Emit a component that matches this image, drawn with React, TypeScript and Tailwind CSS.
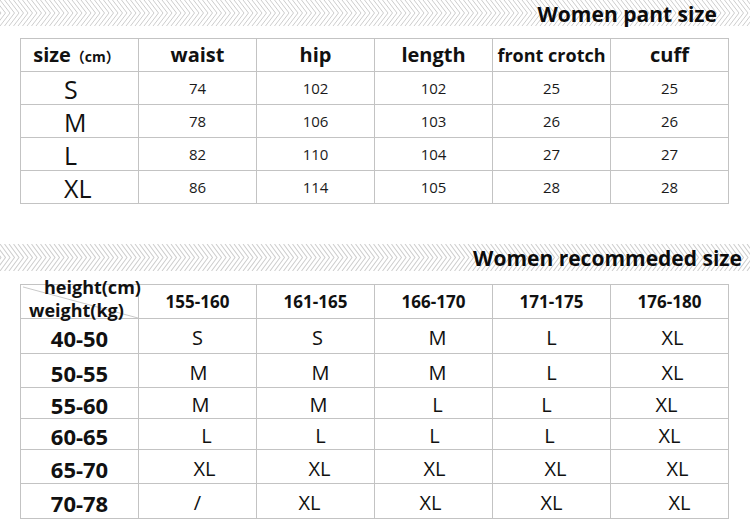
import React from "react";

const PANT_HEAD: [string, string][] = [
  ["waist", "text-[20px]"],
  ["hip", "text-[20px]"],
  ["length", "text-[20px]"],
  ["front crotch", "text-[18px]"],
  ["cuff", "text-[20px]"],
];
const PANT_ROWS: [string, string[]][] = [
  ["S", ["74", "102", "102", "25", "25"]],
  ["M", ["78", "106", "103", "26", "26"]],
  ["L", ["82", "110", "104", "27", "27"]],
  ["XL", ["86", "114", "105", "28", "28"]],
];

const HEIGHTS = ["155-160", "161-165", "166-170", "171-175", "176-180"];

// [label, row height class, cells as [size, nudge class]]
const REC_ROWS: [string, string, [string, string][]][] = [
  ["40-50", "h-[35px]", [["S", ""], ["S", "translate-x-[2px]"], ["M", "translate-x-[4px]"], ["L", ""], ["XL", "translate-x-[3px]"]]],
  ["50-55", "h-[34px]", [["M", "translate-x-[1px]"], ["M", "translate-x-[5px]"], ["M", "translate-x-[4px]"], ["L", ""], ["XL", "translate-x-[3px]"]]],
  ["55-60", "h-[31px]", [["M", "translate-x-[3px]"], ["M", "translate-x-[3px]"], ["L", "translate-x-[4px]"], ["L", "-translate-x-[5px]"], ["XL", "-translate-x-[3px]"]]],
  ["60-65", "h-[31px]", [["L", "translate-x-[9px]"], ["L", "translate-x-[5px]"], ["L", "translate-x-[1px]"], ["L", "-translate-x-[2px]"], ["XL", ""]]],
  ["65-70", "h-[34px]", [["XL", "translate-x-[7px]"], ["XL", "translate-x-[4px]"], ["XL", "translate-x-[1px]"], ["XL", "translate-x-[4px]"], ["XL", "translate-x-[8px]"]]],
  ["70-78", "h-[35px]", [["/", ""], ["XL", "-translate-x-[6px]"], ["XL", "-translate-x-[3px]"], ["XL", ""], ["XL", "translate-x-[10px]"]]],
];

function Chevrons() {
  const lines = [];
  for (let i = -4; i < 172; i++) {
    const x = i * 4.5;
    lines.push(<polyline key={i} points={`${x},0 ${x + 10},13 ${x},26`} />);
  }
  return (
    <svg className="absolute inset-0 h-full w-full" viewBox="0 0 750 26" preserveAspectRatio="none">
      <g fill="none" stroke="#cdcdcd" strokeWidth={1}>
        {lines}
      </g>
    </svg>
  );
}

function Banner({ title, right, h }: { title: string; right: string; h: string }) {
  return (
    <div className={`relative flex items-center justify-end ${h}`}>
      <Chevrons />
      <h2 className={`relative text-[21px] font-bold leading-none text-[#0c0c0c] ${right}`}>{title}</h2>
    </div>
  );
}

export default function App() {
  return (
    <div className="h-[520px] w-[750px] overflow-hidden bg-white font-['Open_Sans','Noto_Sans_CJK_SC',sans-serif] text-[#111]">
      <Banner title="Women pant size" right="pr-[33px] pt-[3px]" h="h-[26px]" />

      <table className="mt-[12px] ml-[20px] w-[709px] table-fixed border-collapse">
        <thead>
          <tr className="h-[33px]">
            <th className="border border-[#c3c3c3] pr-[6px] text-[20px] font-bold">
              size<span className="text-[14px]">（cm）</span>
            </th>
            {PANT_HEAD.map(([h, size]) => (
              <th key={h} className={`border border-[#c3c3c3] font-bold whitespace-nowrap ${size}`}>
                {h}
              </th>
            ))}
          </tr>
        </thead>
        <tbody>
          {PANT_ROWS.map(([size, vals]) => (
            <tr key={size} className="h-[33px]">
              <td className="border border-[#c3c3c3] pl-[43px] pt-[3px] text-[25px] leading-none font-normal">{size}</td>
              {vals.map((v, i) => (
                <td key={i} className="border border-[#c3c3c3] text-center text-[15px] text-[#1a1a1a]">
                  {v}
                </td>
              ))}
            </tr>
          ))}
        </tbody>
      </table>

      <div className="h-[40px]" />

      <Banner title="Women recommeded size" right="pr-[8px] pt-[2px]" h="h-[27px]" />

      <table className="mt-[13px] ml-[20px] w-[709px] table-fixed border-collapse">
        <thead>
          <tr className="h-[34px]">
            <th className="relative border border-[#c3c3c3] p-0">
              <svg className="absolute inset-0 h-full w-full" viewBox="0 0 118 34" preserveAspectRatio="none">
                <line x1="2" y1="2" x2="118" y2="34" stroke="#c8c8c8" strokeWidth={1} />
              </svg>
              <span className="absolute left-[23px] top-[-7px] text-[18px] leading-none font-bold whitespace-nowrap">height(cm)</span>
              <span className="absolute left-[8px] top-[16px] text-[18px] leading-none font-bold whitespace-nowrap">weight(kg)</span>
            </th>
            {HEIGHTS.map((h) => (
              <th key={h} className="border border-[#c3c3c3] text-[17px] font-bold">
                {h}
              </th>
            ))}
          </tr>
        </thead>
        <tbody>
          {REC_ROWS.map(([label, rowH, cells]) => (
            <tr key={label} className={rowH}>
              <td className="border border-[#c3c3c3] pt-[4px] text-center text-[22px] leading-none font-bold">{label}</td>
              {cells.map(([s, nudge], i) => (
                <td key={i} className="border border-[#c3c3c3] pt-[4px] text-center text-[20px] leading-none">
                  <span className={`inline-block ${nudge}`}>{s}</span>
                </td>
              ))}
            </tr>
          ))}
        </tbody>
      </table>
    </div>
  );
}
